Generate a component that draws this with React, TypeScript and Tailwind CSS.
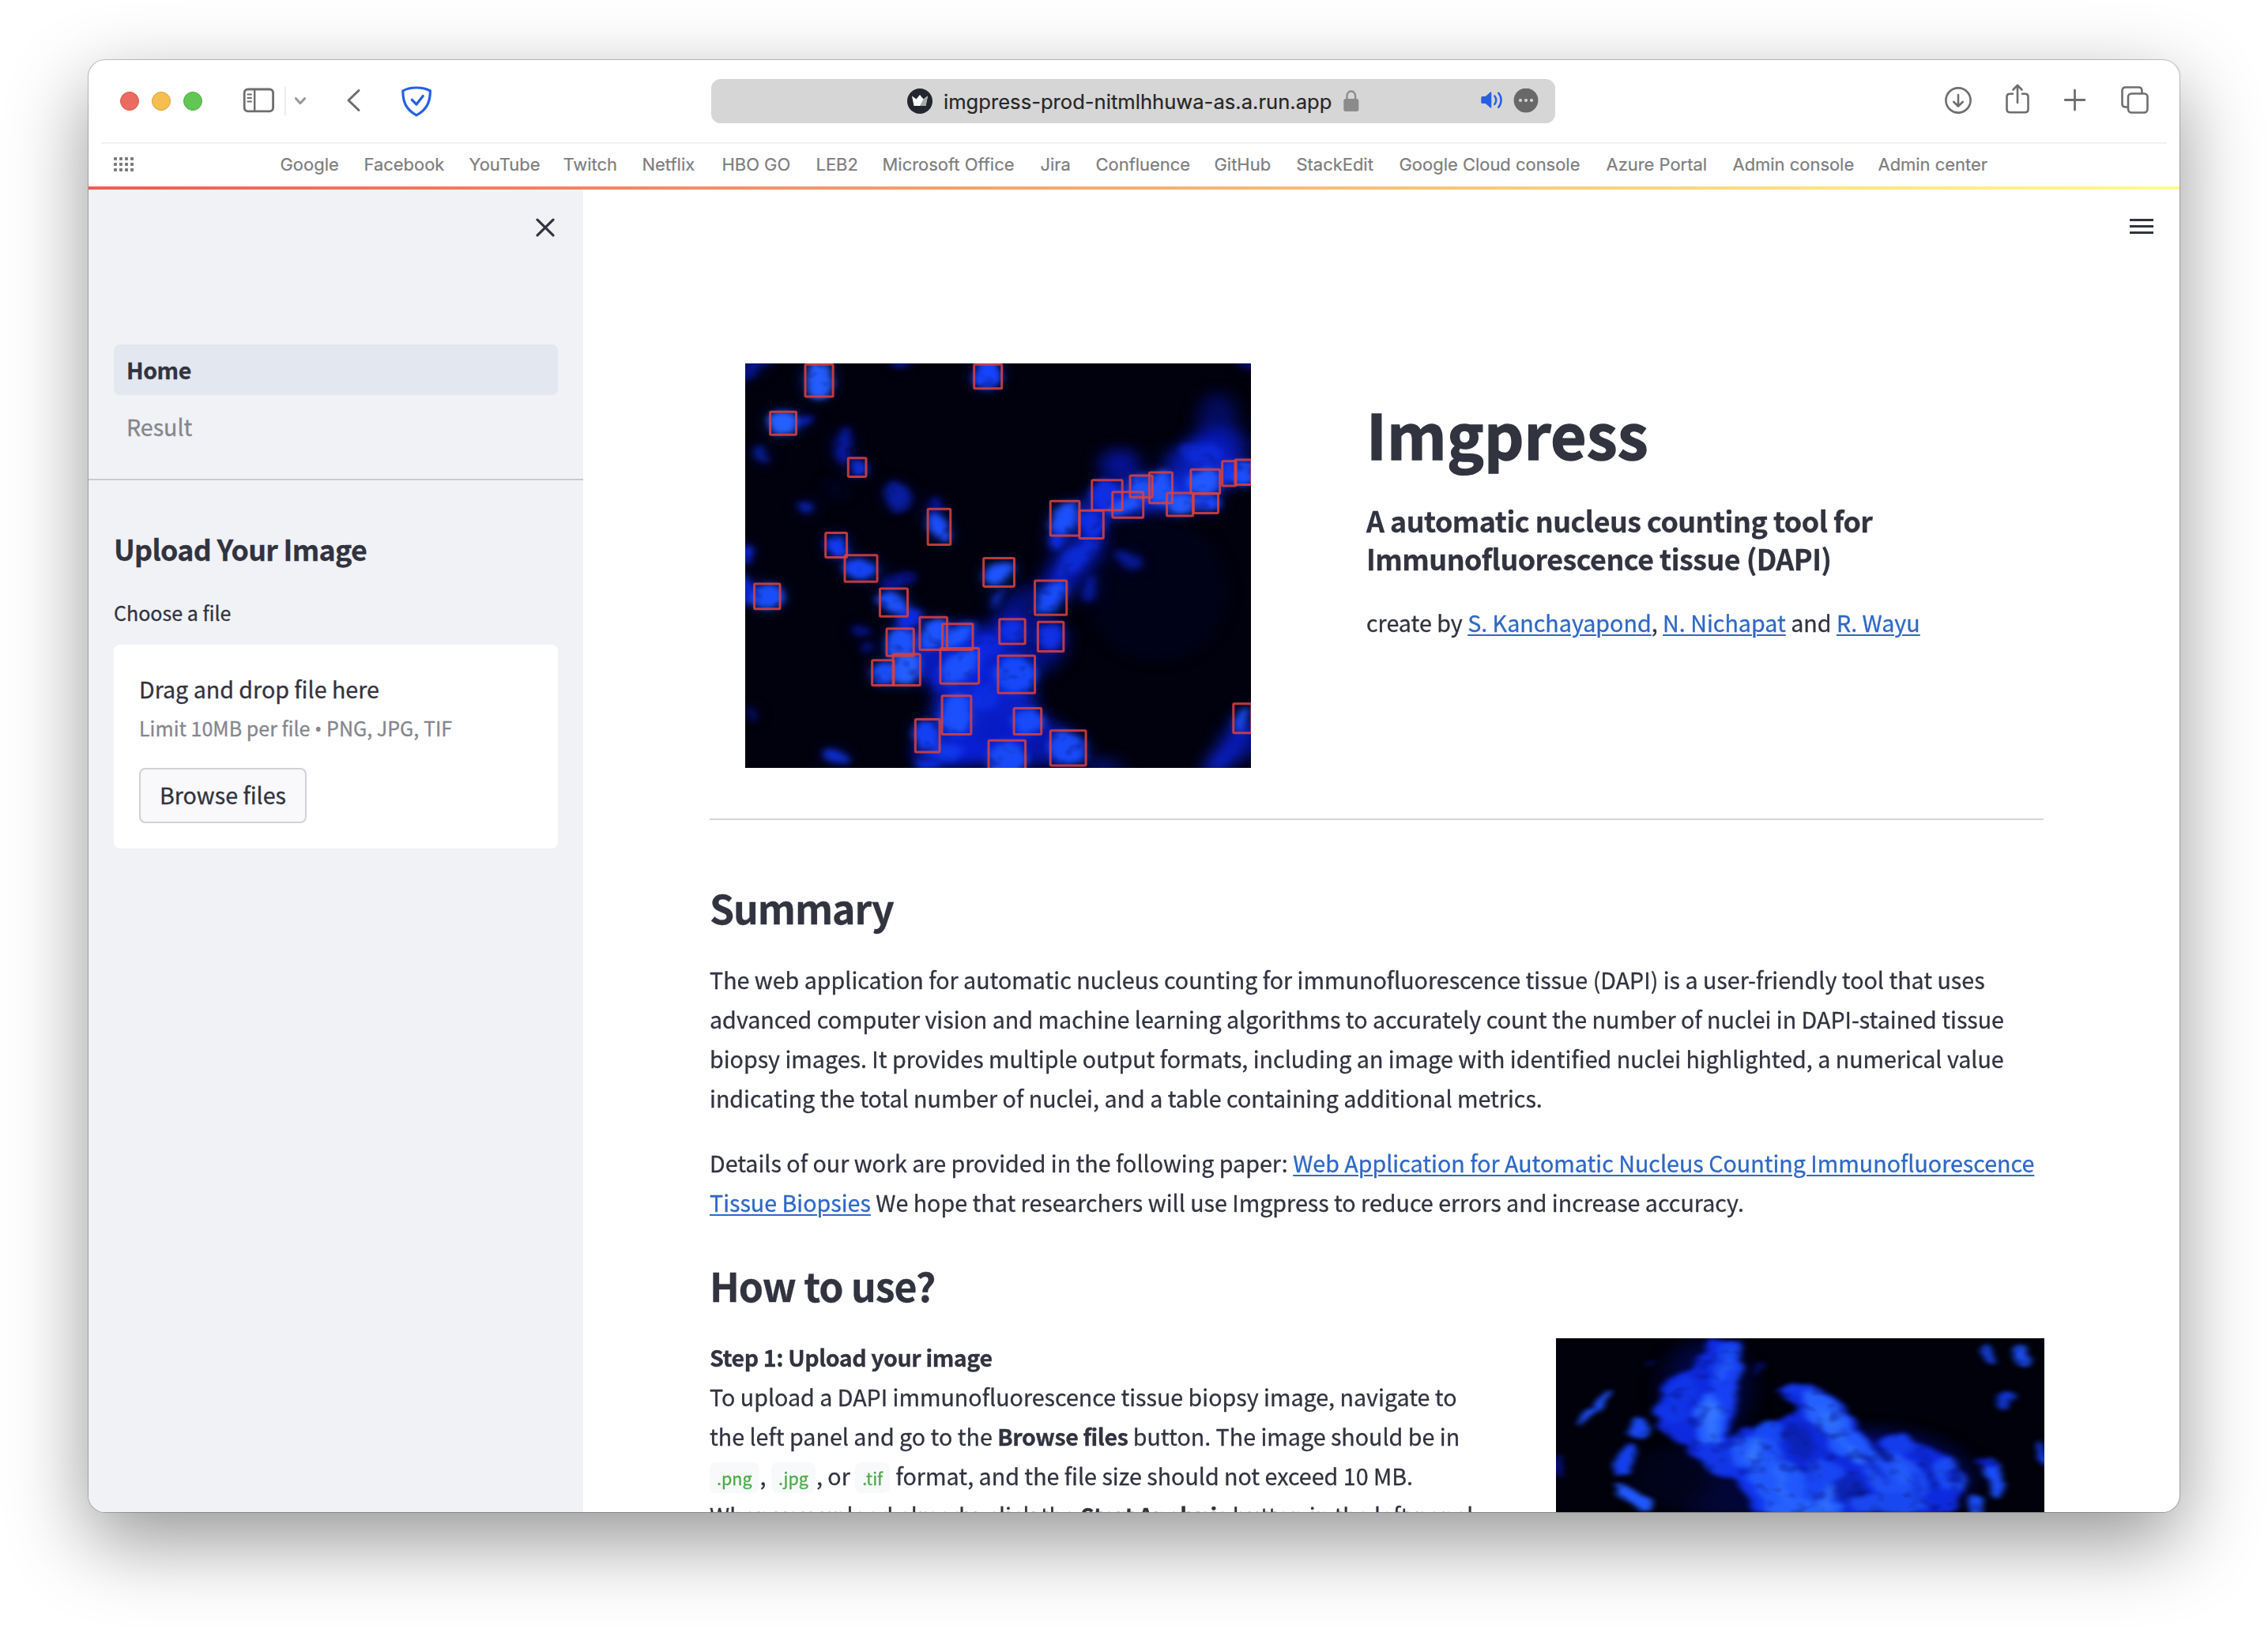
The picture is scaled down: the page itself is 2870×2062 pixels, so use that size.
import type { ReactNode } from "react";

type Box = [number, number, number, number];
// cx, cy, rx, ry, rotation, fill, opacity
type Blob = [number, number, number, number, number, string, number];

const BOOKMARKS: { label: string; width: string }[] = [
  { label: "Google", width: "w-[106px]" },
  { label: "Facebook", width: "w-[133px]" },
  { label: "YouTube", width: "w-[119px]" },
  { label: "Twitch", width: "w-[100px]" },
  { label: "Netflix", width: "w-[101px]" },
  { label: "HBO GO", width: "w-[119px]" },
  { label: "LEB2", width: "w-[84px]" },
  { label: "Microsoft Office", width: "w-[200px]" },
  { label: "Jira", width: "w-[70px]" },
  { label: "Confluence", width: "w-[150px]" },
  { label: "GitHub", width: "w-[104px]" },
  { label: "StackEdit", width: "w-[130px]" },
  { label: "Google Cloud console", width: "w-[262px]" },
  { label: "Azure Portal", width: "w-[160px]" },
  { label: "Admin console", width: "w-[184px]" },
  { label: "Admin center", width: "w-[150px]" },
];

const DETECTIONS: Box[] = [
  [208, 34, 290, 154], [708, 34, 790, 124], [104, 211, 181, 297], [335, 384, 388, 454],
  [571, 575, 638, 709], [268, 664, 331, 756], [325, 748, 421, 847], [429, 873, 511, 977],
  [57, 855, 133, 949], [736, 759, 827, 865], [888, 843, 982, 971], [547, 980, 628, 1102],
  [614, 1005, 704, 1102], [449, 1023, 529, 1125], [468, 1118, 548, 1235], [406, 1141, 470, 1235],
  [608, 1096, 722, 1228], [783, 987, 859, 1080], [897, 998, 973, 1108], [779, 1124, 888, 1264],
  [613, 1274, 699, 1418], [534, 1362, 606, 1485], [826, 1321, 907, 1418], [751, 1441, 860, 1560],
  [934, 1404, 1039, 1535], [934, 545, 1020, 675], [1020, 581, 1091, 685], [1057, 467, 1147, 579],
  [1118, 511, 1209, 607], [1170, 450, 1236, 531], [1227, 438, 1295, 553], [1279, 515, 1356, 601],
  [1350, 427, 1436, 517], [1358, 517, 1431, 590], [1443, 396, 1484, 488], [1481, 391, 1530, 484],
  [1476, 1304, 1530, 1413],
];

const HAZE: Blob[] = [
  [1430, 250, 60, 110, 0, "#0614a0", 0.55],
  [1430, 340, 90, 70, 0, "#0a1ed0", 0.7],
  [1140, 410, 60, 60, 0, "#0818b8", 0.8],
  [1000, 780, 60, 160, 30, "#0818c0", 0.8],
  [1240, 520, 230, 60, -16, "#0c24e0", 0.9],
  [1380, 400, 110, 70, 0, "#0c24e0", 0.7],
  [680, 1130, 170, 120, 0, "#0818c8", 0.9],
  [860, 1080, 120, 120, 0, "#0614a0", 0.7],
  [740, 1330, 150, 200, 0, "#0a20d8", 0.9],
  [640, 1490, 110, 50, 0, "#0a20e0", 0.9],
  [880, 1440, 120, 90, 20, "#0818c8", 0.8],
  [820, 960, 40, 110, 30, "#0818b8", 0.7],
  [1250, 880, 200, 260, 0, "#01062e", 0.35],
  [1460, 1480, 30, 120, 32, "#0c28f0", 1],
  [1500, 1440, 60, 90, 20, "#0818b0", 0.6],
  [1090, 1540, 60, 30, 10, "#0818a0", 0.7],
  [300, 500, 30, 30, 0, "#020a60", 0.4],
];

const NUCLEI: Blob[] = [
  [248, 92, 38, 66, 0, "#245cff", 1], [748, 72, 38, 54, 10, "#1644ff", 1],
  [142, 252, 42, 42, 0, "#2560ff", 1], [205, 245, 22, 14, -20, "#0a1fc0", 0.9],
  [320, 340, 24, 64, 5, "#0a20c0", 0.7], [78, 374, 18, 36, -25, "#0a24b4", 0.8],
  [362, 418, 24, 30, 0, "#0f2ed8", 1], [482, 528, 34, 54, -15, "#0a22b8", 0.8],
  [212, 570, 24, 22, 0, "#0c28c8", 0.8], [605, 645, 22, 64, -22, "#1a4efa", 1],
  [592, 560, 20, 30, 0, "#0818b0", 0.8], [302, 712, 30, 44, -10, "#123af0", 1],
  [374, 798, 52, 36, 10, "#1644f6", 1], [480, 845, 54, 22, -25, "#0818b0", 0.7],
  [34, 740, 14, 38, 0, "#0c28e0", 1], [34, 880, 16, 50, 0, "#0c28e0", 0.9],
  [95, 902, 46, 46, 0, "#184efa", 1], [470, 926, 50, 30, 42, "#1c50fc", 1],
  [515, 990, 30, 44, 30, "#0e2cf0", 0.9], [782, 812, 50, 34, -40, "#1e54ff", 1],
  [772, 905, 10, 40, 25, "#123ae0", 0.9], [935, 908, 36, 66, 28, "#184cfa", 1],
  [1050, 880, 24, 50, 10, "#0a20c0", 0.7], [1165, 765, 44, 24, 40, "#0a20b8", 0.7],
  [1010, 760, 30, 90, 38, "#0e2edc", 0.8], [588, 1042, 32, 64, 22, "#1e54ff", 1],
  [660, 1050, 26, 60, 48, "#1e54ff", 1], [490, 1075, 40, 54, 20, "#1c52fc", 1],
  [508, 1176, 40, 58, 10, "#245eff", 1], [438, 1188, 30, 44, -15, "#184efa", 1],
  [664, 1165, 42, 76, 38, "#1c50fc", 1], [822, 1032, 36, 46, 0, "#1030e4", 1],
  [935, 1052, 34, 50, 0, "#1030e4", 1], [833, 1194, 56, 70, 0, "#1648fa", 1],
  [750, 1090, 44, 44, 0, "#0c28e0", 0.9], [656, 1346, 42, 74, 0, "#1c50fc", 1],
  [568, 1424, 36, 60, -8, "#1440f4", 1], [866, 1370, 44, 46, 0, "#184afa", 1],
  [806, 1510, 56, 66, 0, "#184af8", 1], [986, 1472, 54, 62, -20, "#184afa", 1],
  [740, 1280, 48, 50, 0, "#0e2ee8", 0.8], [630, 1485, 40, 28, 0, "#123cf0", 0.8],
  [976, 612, 36, 66, 18, "#1c50fc", 1], [955, 690, 26, 40, 8, "#0e2ee8", 0.9],
  [1055, 632, 36, 52, 0, "#0f2ee4", 1], [1102, 522, 48, 54, 0, "#0f2ee4", 1],
  [1163, 558, 24, 56, 58, "#1e54ff", 1], [1203, 490, 36, 42, 0, "#1c50fc", 1],
  [1261, 496, 32, 60, 8, "#1e54ff", 1], [1317, 556, 42, 38, -25, "#2458ff", 1],
  [1392, 472, 50, 44, -20, "#2258ff", 1], [1395, 552, 40, 30, 0, "#1844f8", 1],
  [1462, 445, 24, 42, 0, "#1438f0", 1], [1508, 438, 30, 48, 0, "#1c4efc", 1],
  [1380, 370, 60, 40, 10, "#0e2cdc", 0.8], [1502, 1360, 18, 50, 15, "#1c50fa", 1],
  [375, 1030, 28, 16, 0, "#0818a8", 0.8], [395, 1095, 16, 18, 0, "#0818a8", 0.6],
  [298, 1502, 36, 26, 35, "#0e30d8", 0.9], [52, 1340, 8, 28, -10, "#0818a8", 0.8],
  [600, 1220, 20, 40, 0, "#0a20d0", 0.8], [490, 32, 24, 12, 0, "#0818a8", 0.8],
  [40, 55, 28, 40, 20, "#0818a8", 0.7], [75, 32, 30, 12, 0, "#0818a8", 0.7],
  [1520, 34, 24, 14, 0, "#0818a8", 0.7], [570, 1530, 34, 20, 0, "#0e30e8", 0.9],
];

const TISSUE: Blob[] = [
  [445, 240, 32, 150, 6, "#1740f4", 1], [445, 140, 28, 60, 10, "#1440f0", 1],
  [408, 390, 34, 110, -2, "#2560ff", 1], [340, 270, 36, 60, 10, "#1034e8", 1],
  [320, 350, 40, 40, -30, "#1034e8", 1], [247, 415, 28, 40, -8, "#1848f6", 1],
  [213, 532, 20, 60, 18, "#1440ec", 1], [236, 678, 18, 64, -42, "#2058fc", 1],
  [146, 336, 11, 78, 30, "#1e50fc", 1], [430, 530, 40, 60, -30, "#1236e8", 1],
  [545, 430, 40, 50, -20, "#1648f4", 1], [515, 510, 56, 70, -30, "#2058fd", 1],
  [625, 270, 44, 26, 20, "#1236ea", 1], [685, 380, 40, 120, -24, "#2560ff", 1],
  [735, 480, 46, 80, -30, "#2058fc", 1], [615, 465, 32, 70, -10, "#0c22b8", 1],
  [570, 640, 70, 130, -18, "#2058fc", 1], [670, 640, 50, 110, 0, "#1846f2", 1],
  [840, 610, 66, 110, -18, "#1e50f8", 1], [845, 480, 38, 40, 20, "#143cec", 1],
  [730, 650, 34, 62, 0, "#0c24b8", 1], [955, 590, 36, 64, -10, "#1a4af4", 1],
  [820, 700, 90, 40, 0, "#1a48f0", 1], [972, 600, 18, 32, 0, "#0c28c8", 1],
  [1065, 600, 20, 84, -8, "#1a4cf8", 1], [1045, 540, 24, 18, 20, "#0a1ec0", 1],
  [1020, 710, 18, 48, 0, "#1a4cf8", 1], [1053, 135, 16, 44, -8, "#1440dc", 1],
  [1128, 142, 20, 40, -8, "#1a4cec", 1], [1089, 310, 18, 34, 0, "#1034d0", 1],
  [1178, 505, 10, 46, -10, "#1440f4", 1], [630, 720, 80, 40, 0, "#2560ff", 1],
  [495, 640, 16, 90, -25, "#1034ec", 1], [520, 185, 14, 24, 0, "#040c60", 1],
  [272, 165, 10, 12, 0, "#040c60", 1], [56, 560, 10, 40, 0, "#04108a", 1],
];

const STREAKS: Blob[] = [
  [412, 380, 12, 80, 0, "#3c80ff", 0.7], [445, 180, 10, 60, 15, "#2c68ff", 0.5],
  [510, 500, 16, 40, 0, "#3c80ff", 0.7], [690, 400, 14, 80, -24, "#3478ff", 0.6],
  [740, 510, 14, 50, -35, "#3478ff", 0.6], [575, 620, 12, 80, -10, "#3478ff", 0.5],
  [620, 560, 9, 60, -20, "#0d2ad0", 0.6], [790, 560, 9, 70, -30, "#0b22c0", 0.7],
  [680, 680, 12, 50, 10, "#3c80ff", 0.5], [912, 570, 10, 80, -10, "#0922b8", 0.7],
  [800, 500, 12, 50, -25, "#061290", 0.8], [592, 420, 9, 40, 20, "#0a1cb0", 0.6],
  [890, 640, 9, 60, -10, "#0d2ad0", 0.6], [850, 580, 12, 50, -10, "#2c68ff", 0.5],
  [560, 520, 6, 60, -30, "#0d2ad0", 0.6], [990, 620, 8, 40, 0, "#2c68ff", 0.5],
];

function Blobs({ items }: { items: Blob[] }) {
  return (
    <>
      {items.map(([cx, cy, rx, ry, rot, fill, opacity], i) => (
        <ellipse key={i} cx={cx} cy={cy} rx={rx} ry={ry} fill={fill} opacity={opacity} transform={`rotate(${rot} ${cx} ${cy})`} />
      ))}
    </>
  );
}

// Displaces the shapes, blurs them and modulates their brightness with cloudy noise.
function OrganicFilter({ id, blur, seed }: { id: string; blur: number; seed: number }) {
  return (
    <filter id={id} x="0%" y="0%" width="100%" height="100%" colorInterpolationFilters="sRGB">
      <feTurbulence type="fractalNoise" baseFrequency="0.02" numOctaves="2" seed={seed} result="warp" />
      <feDisplacementMap in="SourceGraphic" in2="warp" scale="34" xChannelSelector="R" yChannelSelector="G" />
      <feGaussianBlur stdDeviation={blur} result="soft" />
      <feTurbulence type="fractalNoise" baseFrequency="0.022" numOctaves="2" seed={seed + 3} />
      <feColorMatrix values="1.1 0 0 0 0.5  1.1 0 0 0 0.5  0.6 0 0 0 0.7  0 0 0 0 1" result="cloud" />
      <feComposite in="soft" in2="cloud" operator="arithmetic" k1="1" k2="0" k3="0" k4="0" />
    </filter>
  );
}

function DetectedNuclei() {
  return (
    <svg className="ml-[45px] h-[512px] w-[640px] shrink-0" viewBox="30 30 1498 1514" preserveAspectRatio="none">
      <defs>
        <filter id="hazeBlur" x="-20%" y="-20%" width="140%" height="140%" colorInterpolationFilters="sRGB">
          <feGaussianBlur stdDeviation="26" />
        </filter>
        <OrganicFilter id="nucleus" blur={11} seed={4} />
      </defs>
      <rect x="30" y="30" width="1498" height="1514" fill="#01010d" />
      <g filter="url(#hazeBlur)"><Blobs items={HAZE} /></g>
      <g filter="url(#hazeBlur)" opacity="0.55"><Blobs items={NUCLEI} /></g>
      <g filter="url(#nucleus)"><Blobs items={NUCLEI} /></g>
      <g fill="none" stroke="#d8403f" strokeOpacity="0.88">
        {DETECTIONS.map(([x1, y1, x2, y2], i) => (
          <rect key={i} x={x1} y={y1} width={x2 - x1} height={y2 - y1} rx="3" strokeWidth="3" vectorEffect="non-scaling-stroke" />
        ))}
      </g>
    </svg>
  );
}

function TissueSample() {
  return (
    <svg className="mt-[2px] h-[220px] w-[618px] shrink-0" viewBox="53 72 1127 660" preserveAspectRatio="none">
      <defs>
        <OrganicFilter id="tissue" blur={7.5} seed={7} />
        <filter id="tissueGlow" x="-20%" y="-20%" width="140%" height="140%" colorInterpolationFilters="sRGB">
          <feGaussianBlur stdDeviation="26" />
        </filter>
      </defs>
      <rect x="53" y="72" width="1127" height="660" fill="#00010a" />
      <g filter="url(#tissueGlow)">
        <ellipse cx="600" cy="600" rx="340" ry="180" fill="#030c60" opacity="0.5" />
        <ellipse cx="400" cy="260" rx="100" ry="180" fill="#040e78" opacity="0.5" />
        <ellipse cx="840" cy="560" rx="190" ry="130" fill="#040e78" opacity="0.6" transform="rotate(30 840 560)" />
        <ellipse cx="320" cy="600" rx="90" ry="110" fill="#01031c" />
      </g>
      <g filter="url(#tissue)">
        <path
          d="M405 70L475 80 480 200 465 350 450 460 505 400 585 385 610 345 565 270 620 240 700 300 760 420 805 510 800 450 850 435 905 480 960 520 1000 590 975 740 520 740 470 620 400 560 350 485 290 410 300 230 380 180z"
          fill="#0e2ade"
        />
        <Blobs items={TISSUE} />
        <Blobs items={STREAKS} />
      </g>
    </svg>
  );
}

function Toolbar() {
  return (
    <div className="flex h-[104px] items-center pl-10">
      <div className="flex gap-4">
        <span className="size-6 rounded-full border border-[#d2564b] bg-[#ec6b60]" />
        <span className="size-6 rounded-full border border-[#d6a243] bg-[#f5bf4f]" />
        <span className="size-6 rounded-full border border-[#58a942] bg-[#62c655]" />
      </div>
      <svg className="ml-[51px] h-[44px] w-[41px]" viewBox="307 106 41 44" fill="none" stroke="#6e6e6e" strokeWidth="2.8">
        <rect x="309.2" y="113" width="36.4" height="27.8" rx="4.5" />
        <path d="M322.2 113v28" strokeWidth="2.4" />
        <path d="M313.4 119.5h4.6M313.4 124h4.6M313.4 128.5h4.6" strokeWidth="1.9" strokeLinecap="round" />
      </svg>
      <span className="ml-3 h-9 w-0.5 bg-[#ececec]" />
      <svg className="ml-[9px] h-[44px] w-[17px]" viewBox="371 106 17 44" fill="none" stroke="#989898" strokeWidth="3" strokeLinecap="round" strokeLinejoin="round">
        <path d="M374.5 124.7l5.5 6 5.5-6" />
      </svg>
      <svg className="ml-[49px] h-[44px] w-[21px]" viewBox="437 106 21 44" fill="none" stroke="#6c6c6c" strokeWidth="3" strokeLinecap="round" strokeLinejoin="round">
        <path d="M454 114.5L441 127l13 12.5" />
      </svg>
      <svg className="ml-[49px] h-[44px] w-[41px]" viewBox="507 106 41 44" fill="none" stroke="#2560e4" strokeWidth="3.2" strokeLinecap="round" strokeLinejoin="round">
        <path d="M527 111C520.5 111 514.5 112.2 509.8 115c0 13 3.2 23.2 17.2 30.8 14-7.6 17.4-17.8 17.4-30.8C539.5 112.2 533.5 111 527 111z" />
        <path d="M521.3 126.3l5.7 5.7 8.3-10.5" />
      </svg>
      <div className="ml-[352px] flex h-14 w-[1068px] items-center rounded-xl bg-[#d6d6d6] pl-[248px]">
        <svg className="h-8 w-8" viewBox="1148 112 32 32">
          <circle cx="1164" cy="128" r="16" fill="#25272f" />
          <path d="M1154 121.5l5.5 4 4.5-5.5 4.5 5.5 5.5-4-2.5 12.5h-15z" fill="#fff" />
          <path d="M1174 121.5l-5.5 4-4.5 8.5h7.5z" fill="#a9a9ad" />
        </svg>
        <span className="ml-[14px] w-[493px] pt-0.5 font-[Inter,sans-serif] text-[25.6px] whitespace-nowrap text-[#262626] [-webkit-text-stroke:0.2px]">imgpress-prod-nitmlhhuwa-as.a.run.app</span>
        <svg className="ml-[13px] h-8 w-5" viewBox="1700 112 20 32">
          <path d="M1704.5 127v-5.5a5.3 6 0 0 1 10.6 0V127" fill="none" stroke="#8b8b8b" strokeWidth="2.3" />
          <rect x="1700.3" y="125" width="19" height="16" rx="2.8" fill="#8b8b8b" />
        </svg>
        <svg className="ml-[153px] h-8 w-[31px]" viewBox="1873 112 31 32">
          <path d="M1874.3 123.5q0-1.5 1.5-1.5h4l6-5.3q1.5-1 1.5.8v18q0 1.8-1.5.8l-6-5.3h-4q-1.5 0-1.5-1.5z" fill="#2560e4" />
          <path d="M1891.3 121.5a8 8 0 0 1 0 10.5M1896.3 117.8a14 14 0 0 1 0 18" fill="none" stroke="#2560e4" strokeWidth="2.5" strokeLinecap="round" />
        </svg>
        <svg className="ml-[11px] h-8 w-8" viewBox="1915 112 32 32">
          <circle cx="1931" cy="127" r="15.4" fill="#686868" />
          <circle cx="1924" cy="127" r="2.1" fill="#d6d6d6" />
          <circle cx="1931" cy="127" r="2.1" fill="#d6d6d6" />
          <circle cx="1938" cy="127" r="2.1" fill="#d6d6d6" />
        </svg>
      </div>
      <svg className="ml-[492px] h-[44px] w-9" viewBox="2460 106 36 44" fill="none" stroke="#6e6e6e" strokeWidth="2.6" strokeLinecap="round" strokeLinejoin="round">
        <circle cx="2478" cy="127" r="15.6" />
        <path d="M2478 120v14M2472.3 129l5.7 5.5 5.7-5.5" />
      </svg>
      <svg className="ml-10 h-[44px] w-9" viewBox="2536 106 36 44" fill="none" stroke="#6e6e6e" strokeWidth="2.6" strokeLinecap="round" strokeLinejoin="round">
        <path d="M2547 118.8h-3.5q-4 0-4 4v15.4q0 4 4 4h19q4 0 4-4v-15.4q0-4-4-4h-3.5" />
        <path d="M2553 130v-21M2547.5 113.5l5.5-5.5 5.5 5.5" />
      </svg>
      <svg className="ml-[39px] h-[44px] w-[30px]" viewBox="2611 106 30 44" fill="none" stroke="#6e6e6e" strokeWidth="2.8" strokeLinecap="round">
        <path d="M2625.5 114.2v24.8M2613.2 126.5h24.8" />
      </svg>
      <svg className="ml-[42px] h-[44px] w-[38px]" viewBox="2683 106 38 44" fill="none" stroke="#6e6e6e" strokeWidth="2.6">
        <path d="M2693 135.5h-3.2q-4.3 0-4.3-4.3v-16.4q0-4.3 4.3-4.3h16.4q4.3 0 4.3 4.3v3.2" />
        <rect x="2693" y="118.5" width="24.5" height="24" rx="4.3" />
      </svg>
    </div>
  );
}

function BookmarksBar() {
  return (
    <div className="flex h-[54px] items-center">
      <div className="ml-8 grid w-[25px] grid-cols-4 gap-x-[3px] gap-y-[3px] pb-0.5">
        {Array.from({ length: 12 }, (_, i) => (
          <span key={i} className="size-1 rounded-[1px] bg-[#7b7b7b]" />
        ))}
      </div>
      <nav className="ml-[185.5px] flex pb-[3px] font-[Inter,sans-serif] text-[21.95px] leading-7 text-[#7d7d7d] [-webkit-text-stroke:0.2px]">
        {BOOKMARKS.map((b) => (
          <span key={b.label} className={`${b.width} whitespace-nowrap`}>{b.label}</span>
        ))}
      </nav>
    </div>
  );
}

function Sidebar() {
  return (
    <aside className="flex w-[626px] shrink-0 flex-col bg-[#f0f2f6]">
      <div className="flex h-[196px] justify-end pt-[36px] pr-[35px]">
        <svg className="h-6 w-[26px]" viewBox="0 0 26 24" fill="none" stroke="#31333f" strokeWidth="3.2" strokeLinecap="round">
          <path d="M3 2.2l20 19.6M23 2.2L3 21.8" />
        </svg>
      </div>
      <nav className="flex flex-col gap-2 px-8 text-[28.62px]">
        <a className="h-16 rounded-lg bg-[#e3e7ef] pl-4 leading-[64px] font-bold tracking-[-0.5px]">Home</a>
        <a className="h-16 rounded-lg pl-4 leading-[64px] text-[#85868d]">Result</a>
      </nav>
      <div className="mt-[34px] h-0.5 bg-[#c9cad0]" />
      <div className="flex flex-col px-8 pt-[62px]">
        <h3 className="text-[35.8px] leading-[48px] font-bold tracking-[-0.7px]">Upload Your Image</h3>
        <label className="mt-[37px] text-[25.04px] leading-10">Choose a file</label>
        <section className="mt-[21px] flex h-[258px] flex-col items-start rounded-lg bg-white px-8 pt-[31px]">
          <span className="text-[28.62px] leading-[50px]">Drag and drop file here</span>
          <small className="mt-1 text-[25.04px] leading-10 whitespace-nowrap text-[#85868d]">
            Limit 10MB per file <span className="font-['Open_Sans'] leading-none">•</span> PNG, JPG, TIF
          </small>
          <button className="mt-[31px] h-[70px] w-[212px] rounded-lg border-2 border-[#d1d2d6] bg-[#f9f9fc] pb-[3px] text-[28.62px] leading-[62px]">
            Browse files
          </button>
        </section>
      </div>
    </aside>
  );
}

function Link({ children }: { children: ReactNode }) {
  return <a className="text-[#2f68c5] underline decoration-2 underline-offset-[3px]">{children}</a>;
}

function Code({ children }: { children: ReactNode }) {
  return <code className="mr-px rounded-lg bg-[#f8f9fb] px-[9px] py-1 font-['Noto_Sans_CJK_SC',sans-serif] text-[21.5px] leading-none text-[#4bab48]">{children}</code>;
}

function Strong({ children }: { children: ReactNode }) {
  return <strong className="font-bold tracking-[-0.45px]">{children}</strong>;
}

function Main() {
  return (
    <main className="relative flex-1 pt-[220px] pl-[160px]">
      <button className="absolute top-[37px] right-[33px] flex w-[30px] flex-col gap-[5px]">
        <span className="h-[3px] bg-[#31333f]" />
        <span className="h-[3px] bg-[#31333f]" />
        <span className="h-[3px] bg-[#31333f]" />
      </button>
      <div className="w-[1689px]">
        <div className="flex">
          <DetectedNuclei />
          <div className="ml-[146px] pt-[35px]">
            <h1 className="text-[78.5px] leading-[106px] font-bold tracking-[0.15px] [-webkit-text-stroke:1.4px]">Imgpress</h1>
            <h3 className="mt-[33px] text-[35.8px] leading-[48px] font-bold tracking-[-0.5px] whitespace-nowrap">
              A automatic nucleus counting tool for
              <br />
              Immunofluorescence tissue (DAPI)
            </h3>
            <p className="mt-[33px] text-[28.66px] leading-[50px] whitespace-nowrap">
              create by <Link>S. Kanchayapond</Link>, <Link>N. Nichapat</Link> and <Link>R. Wayu</Link>
            </p>
          </div>
        </div>
        <div className="mt-16 h-0.5 w-[1688px] bg-[#d6d6d9]" />
        <h2 className="mt-20 text-[50px] leading-[60px] font-bold tracking-[-1.1px]">Summary</h2>
        <div className="mt-[37px] flex flex-col gap-8 text-[28.65px] leading-[50px] whitespace-nowrap">
          <p>
            The web application for automatic nucleus counting for immunofluorescence tissue (DAPI) is a user-friendly tool that uses
            <br />
            advanced computer vision and machine learning algorithms to accurately count the number of nuclei in DAPI-stained tissue
            <br />
            biopsy images. It provides multiple output formats, including an image with identified nuclei highlighted, a numerical value
            <br />
            indicating the total number of nuclei, and a table containing additional metrics.
          </p>
          <p>
            Details of our work are provided in the following paper:{" "}
            <Link>
              Web Application for Automatic Nucleus Counting Immunofluorescence
              <br />
              Tissue Biopsies
            </Link>{" "}
            We hope that researchers will use Imgpress to reduce errors and increase accuracy.
          </p>
        </div>
        <h2 className="mt-[49px] text-[50px] leading-[60px] font-bold tracking-[-1px]">How to use?</h2>
        <div className="mt-[36px] flex justify-between">
          <p className="pt-px text-[28.65px] leading-[50px] whitespace-nowrap">
            <Strong>Step 1: Upload your image</Strong>
            <br />
            To upload a DAPI immunofluorescence tissue biopsy image, navigate to
            <br />
            the left panel and go to the <Strong>Browse files</Strong> button. The image should be in
            <br />
            <Code>.png</Code>, <Code>.jpg</Code>, or <Code>.tif</Code> format, and the file size should not exceed 10 MB.
            <br />
            When you upload already, click the <Strong>Start Analysis</Strong> button in the left panel
          </p>
          <TissueSample />
        </div>
      </div>
    </main>
  );
}

export default function App() {
  return (
    <div className="h-[2062px] w-[2870px] overflow-hidden bg-white pt-[76px] pl-[112px]">
      <div className="flex h-[1838px] w-[2646px] flex-col overflow-hidden rounded-[21px] bg-white shadow-[0_0_0_1px_rgba(0,0,0,0.22),0_36px_100px_rgba(0,0,0,0.42)]">
        <Toolbar />
        <div className="mx-4 h-0.5 shrink-0 bg-[#f0f0f0]" />
        <BookmarksBar />
        <div className="h-1 shrink-0 bg-linear-to-r from-[#ef5b55] via-[#f5ae72] to-[#fffc8c]" />
        <div className="flex min-h-0 flex-1 overflow-hidden font-['Noto_Sans_CJK_SC',sans-serif] text-[#31333f] [-webkit-text-stroke:0.3px]">
          <Sidebar />
          <Main />
        </div>
      </div>
    </div>
  );
}
